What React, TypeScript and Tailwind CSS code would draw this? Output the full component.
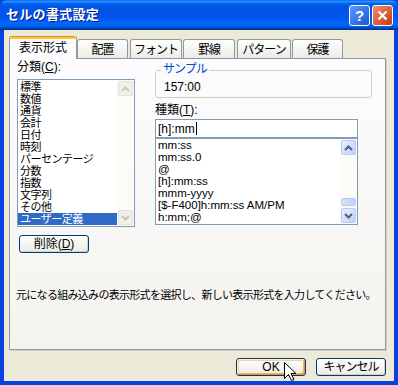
import React from "react";

const CATEGORIES = [
  "標準",
  "数値",
  "通貨",
  "会計",
  "日付",
  "時刻",
  "パーセンテージ",
  "分数",
  "指数",
  "文字列",
  "その他",
  "ユーザー定義",
];

const FORMATS = ["mm:ss", "mm:ss.0", "@", "[h]:mm:ss", "mmm-yyyy", "[$-F400]h:mm:ss AM/PM", "h:mm;@"];

const TABS = [
  { label: "配置", cls: "w-[51px]" },
  { label: "フォント", cls: "w-[52px] ml-[2px]" },
  { label: "罫線", cls: "w-[52px] ml-[1px]" },
  { label: "パターン", cls: "w-[54px] ml-[2px]" },
  { label: "保護", cls: "w-[51px] ml-[1px]" },
];

function Chevron({ up, color }: { up?: boolean; color: string }) {
  return (
    <svg width="9" height="6" viewBox="0 0 9 6">
      <polyline
        points={up ? "1,5 4.5,1.5 8,5" : "1,1 4.5,4.5 8,1"}
        fill="none"
        stroke={color}
        strokeWidth="2"
      />
    </svg>
  );
}

function ScrollButton({ up, disabled }: { up?: boolean; disabled?: boolean }) {
  return (
    <div
      className={
        disabled
          ? "w-[15px] h-[15px] rounded-[2px] border border-[#E3E2DA] bg-[#F1F0EA] flex items-center justify-center"
          : "w-[15px] h-[15px] rounded-[2px] border border-[#B7CAF5] bg-[linear-gradient(135deg,#E8EFFD,#BFD1FA)] flex items-center justify-center"
      }
    >
      <Chevron up={up} color={disabled ? "#C9C7BA" : "#4D6185"} />
    </div>
  );
}

function XpButton({ children, focused }: { children: React.ReactNode; focused?: boolean }) {
  return (
    <div
      className={
        focused
          ? "w-[70px] h-[18px] rounded-[3px] border border-[#003C74] bg-[linear-gradient(#FFFFFF,#ECEBE6)] flex items-center justify-center text-[12px] leading-[12px] shadow-[inset_1px_1px_0_#FFF0CF,inset_-1px_-1px_0_#E5973C,inset_2px_2px_0_#F9D38D,inset_-2px_-2px_0_#F8B330]"
          : "w-[70px] h-[18px] rounded-[3px] border border-[#003C74] bg-[linear-gradient(#FFFFFF,#ECEBE6)] flex items-center justify-center text-[12px] leading-[12px] shadow-[inset_-1px_-1px_0_#D6D0C5]"
      }
    >
      {children}
    </div>
  );
}

function TitleBar() {
  return (
    <div className="h-[30px] shrink-0 flex items-center justify-between pl-[6px] pr-[5px] rounded-t-[7px] bg-[linear-gradient(#0058EE_0%,#3593FF_4%,#288EFF_6%,#127DFF_8%,#036FFC_10%,#0262EE_14%,#0057E5_20%,#0054E3_24%,#0055EB_56%,#005BF5_66%,#026AFE_76%,#0062EF_86%,#0052D6_92%,#0040AB_94%,#003092_100%)]">
      <span className="text-white font-bold text-[13px] tracking-[0.3px] [text-shadow:1px_1px_#0A1883]">
        セルの書式設定
      </span>
      <div className="flex gap-[2px] pt-px">
        <div className="w-[21px] h-[21px] rounded-[3px] border border-white bg-[linear-gradient(135deg,#5A9BFC,#1C54D8)] flex items-center justify-center text-white font-bold text-[15px] leading-none">
          ?
        </div>
        <div className="w-[21px] h-[21px] rounded-[3px] border border-white bg-[linear-gradient(135deg,#EE8E70,#C83A12)] flex items-center justify-center">
          <svg width="11" height="11" viewBox="0 0 11 11">
            <path d="M1.5 1.5 L9.5 9.5 M9.5 1.5 L1.5 9.5" stroke="white" strokeWidth="2.2" />
          </svg>
        </div>
      </div>
    </div>
  );
}

export default function App() {
  return (
    <div className="relative w-[398px] h-[385px] flex flex-col bg-[#0842DE] [font-family:'Liberation_Sans','Noto_Sans_CJK_JP',sans-serif] text-black">
      <TitleBar />

      <div className="flex-1 flex flex-col bg-[#ECE9D8] ml-[4px] mr-[4px] mb-[4px] pl-[5px] pt-[6px]">
        {/* tabs */}
        <div className="h-[22px] flex items-end">
          <div className="relative z-10 -mb-px w-[68px] h-[23px] flex flex-col rounded-t-[3px] border-x border-[#919B9C] bg-[#FCFCFE] overflow-hidden">
            <div className="h-px bg-[#E68B2C]" />
            <div className="h-[2px] bg-[#FFC73C]" />
            <div className="flex-1 flex items-center justify-center text-[12px] leading-[12px] pb-[2px]">
              表示形式
            </div>
          </div>
          {TABS.map((t) => (
            <div
              key={t.label}
              className={
                "h-[19px] rounded-t-[3px] border border-b-0 border-[#919B9C] bg-[linear-gradient(#FFFFFF,#ECEBE6)] flex items-center justify-center text-[12px] leading-[12px] tracking-[-1px] pt-[2px] " +
                t.cls
              }
            >
              {t.label}
            </div>
          ))}
        </div>

        {/* panel */}
        <div className="w-[377px] h-[292px] border border-[#919B9C] bg-[linear-gradient(#FCFCFE,#F4F3EE)] shadow-[1px_1px_0_#D0CEBF] flex flex-col">
          <div className="flex">
            {/* left column */}
            <div className="ml-[7px] w-[118px] flex flex-col">
              <div className="mt-[2px] h-[12px] text-[12px] leading-[12px]">
                分類(<span className="underline">C</span>):
              </div>
              <div className="mt-[6px] h-[148px] w-[118px] border border-[#7F9DB9] bg-white flex">
                <div className="flex-1 flex flex-col pt-px">
                  {CATEGORIES.map((c, i) => (
                    <div
                      key={c}
                      className={
                        i === CATEGORIES.length - 1
                          ? "h-[12px] leading-[12px] text-[11px] tracking-[-0.5px] pl-[2px] bg-[#316AC5] text-white"
                          : "h-[12px] leading-[12px] text-[11px] tracking-[-0.5px] pl-[2px]"
                      }
                    >
                      {c}
                    </div>
                  ))}
                </div>
                <div className="w-[17px] flex flex-col justify-between p-px bg-[#FBFBF8]">
                  <ScrollButton up disabled />
                  <ScrollButton disabled />
                </div>
              </div>
              <div className="mt-[8px] ml-[2px]">
                <XpButton>
                  削除(<span className="underline">D</span>)
                </XpButton>
              </div>
            </div>

            {/* right column */}
            <div className="ml-[20px] w-[217px] flex flex-col">
              <div className="relative mt-[11px] h-[28px] rounded-[3px] border border-[#D0D0BF] flex items-center pl-[8px] pt-[6px]">
                <span className="absolute left-[5px] top-[-8px] px-[2px] bg-[#FBFBFC] text-[#0046D5] text-[12px] leading-[13px] tracking-[-1px]">
                  サンプル
                </span>
                <span className="text-[12px] leading-[12px]">157:00</span>
              </div>
              <div className="mt-[6px] h-[12px] text-[12px] leading-[12px]">
                種類(<span className="underline">T</span>):
              </div>
              <div className="mt-[3px] w-[203px] h-[19px] border border-[#7F9DB9] bg-white flex items-center pl-[2px] text-[12px] leading-[12px]">
                [h]:mm
                <span className="ml-px w-px h-[13px] bg-black" />
              </div>
              <div className="w-[203px] h-[87px] border border-[#7F9DB9] bg-white flex">
                <div className="flex-1 flex flex-col">
                  {FORMATS.map((f) => (
                    <div key={f} className="h-[12px] leading-[12px] text-[11.5px] pl-[2px] whitespace-nowrap">
                      {f}
                    </div>
                  ))}
                </div>
                <div className="w-[17px] flex flex-col p-px bg-[#FBFBF8]">
                  <ScrollButton up />
                  <div className="flex-1" />
                  <div className="h-[8px] rounded-[2px] border border-[#B7CAF5] bg-[linear-gradient(90deg,#D6E2FD,#BFD1FA)]" />
                  <div className="h-[2px]" />
                  <ScrollButton />
                </div>
              </div>
            </div>
          </div>

          <div className="ml-[6px] mt-[36px] h-[12px] text-[11px] leading-[12px] tracking-[-0.7px] whitespace-nowrap">
            元になる組み込みの表示形式を選択し、新しい表示形式を入力してください。
          </div>
        </div>

        {/* bottom buttons */}
        <div className="mt-[8px] w-[377px] flex justify-end gap-[10px]">
          <XpButton focused>OK</XpButton>
          <XpButton>
            <span className="tracking-[-1px]">キャンセル</span>
          </XpButton>
        </div>
      </div>

      {/* mouse pointer */}
      <svg className="absolute left-[284px] top-[362px]" width="13" height="20" viewBox="0 0 13 20">
        <path
          d="M0.5 0.5 L0.5 16.5 L4.5 12.5 L7.5 18.5 L10 17.5 L7 11.5 L12 11.5 Z"
          fill="white"
          stroke="black"
          strokeWidth="1"
        />
      </svg>
    </div>
  );
}
